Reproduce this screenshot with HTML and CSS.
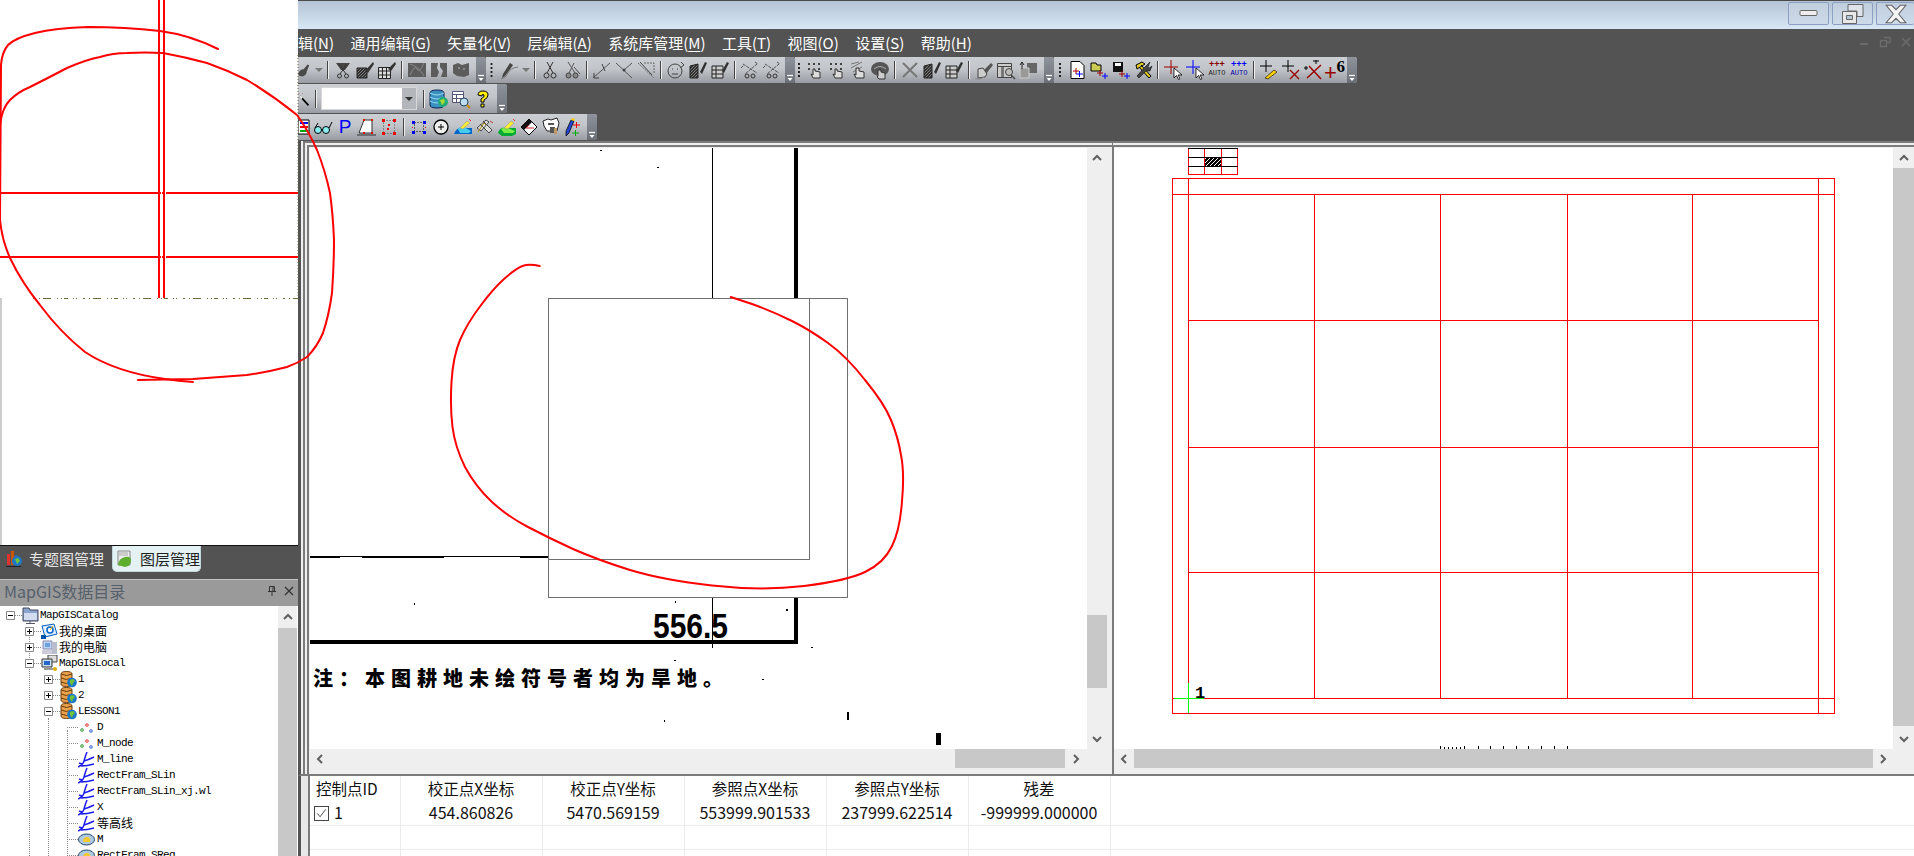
FILE: index.html
```html
<!DOCTYPE html>
<html lang="zh-CN">
<head>
<meta charset="utf-8">
<title>MapGIS</title>
<link rel="stylesheet" href="styles.css">
</head>
<body>
<svg class="sprite" aria-hidden="true">
  <defs>
    <pattern id="hatch" width="3" height="3" patternUnits="userSpaceOnUse"><rect width="3" height="3" fill="#333"/><path d="M0 3L3 0" stroke="#999" stroke-width=".7"/></pattern>
    <pattern id="maphatch" width="4" height="4" patternUnits="userSpaceOnUse"><rect width="4" height="4" fill="#000"/><path d="M0 4L4 0" stroke="#fff" stroke-width="1"/></pattern>
  </defs>
  <symbol id="hand" viewBox="0 0 20 20"><path d="M0 15Q2 9 7 9L12 3l2 1-3 8Q10 18 5 18 1 18 0 15z" fill="#4a4a4a"/></symbol>
  <symbol id="trapsc" viewBox="0 0 20 20"><path d="M3 3h14l-5 7H8z" fill="#444"/><path d="M6 4l7 10M14 4L7 14" stroke="#333" fill="none"/><circle cx="6.500" cy="16" r="2" fill="none" stroke="#333"/><circle cx="13.500" cy="16" r="2" fill="none" stroke="#333"/></symbol>
  <symbol id="hatchbr" viewBox="0 0 20 20"><path d="M2 8h10v10H2z" fill="url(#hatch)" stroke="#222"/><path d="M10 11l8-9 1 2-6 9z" fill="#333"/></symbol>
  <symbol id="gridbr" viewBox="0 0 20 20"><path d="M1.500 7.500h12v11h-12zM1.500 11h12M1.500 15h12M5.500 7.500v11M9.500 7.500v11" fill="#ddd" stroke="#222"/><path d="M11 9l7-7 1 2-5 7z" fill="#333"/></symbol>
  <symbol id="dim1" viewBox="0 0 20 20"><path d="M1 3h18v14H1z" fill="#5c5c5c"/><path d="M3 15Q8 4 10 9t7-6M3 4q8 2 14 12" fill="none" stroke="#888"/></symbol>
  <symbol id="dim2" viewBox="0 0 20 20"><path d="M2 3h7l-1 5 2 4-2 5H2zM11 3h7v14h-6l2-6-3-4z" fill="#5c5c5c"/></symbol>
  <symbol id="dim3" viewBox="0 0 20 20"><path d="M2 5l5-2 4 2 7-2v12l-5 2-7-1-4-3z" fill="#5c5c5c"/><circle cx="8" cy="8" r="1" fill="#999"/><circle cx="13" cy="9" r="1" fill="#999"/></symbol>
  <symbol id="pencv" viewBox="0 0 20 20"><path d="M3 14L10 3l3 2-8 11-3 2z" fill="#444"/><path d="M1 19q5-1 7-6 2-5 10-6" fill="none" stroke="#777"/></symbol>
  <symbol id="sc" viewBox="0 0 20 20"><path d="M7 2l6 11M13 2L7 13" stroke="#333"/><circle cx="6.500" cy="15.500" r="2.500" fill="none" stroke="#333"/><circle cx="13.500" cy="15.500" r="2.500" fill="none" stroke="#333"/></symbol>
  <symbol id="sc2" viewBox="0 0 20 20"><path d="M6 2l7 11M12 3L7 13M12 7l6 7" stroke="#555"/><circle cx="6.500" cy="15.500" r="2.500" fill="#888" stroke="#444"/><circle cx="13.500" cy="15.500" r="2.500" fill="#888" stroke="#444"/></symbol>
  <symbol id="ln1" viewBox="0 0 20 20"><path d="M1 18L18 3" stroke="#555"/><path d="M2 13v5h5M10 4l3 7" stroke="#444" fill="none"/></symbol>
  <symbol id="ln2" viewBox="0 0 20 20"><path d="M2 3l16 15M18 3L10 10" stroke="#555" fill="none"/><circle cx="10" cy="10" r="1.500" fill="#444"/></symbol>
  <symbol id="ln3" viewBox="0 0 20 20"><path d="M2 3l16 15M8 3h10v10" stroke="#666" fill="none" stroke-dasharray="2 1"/><path d="M4 2l12 13" stroke="#444"/></symbol>
  <symbol id="face" viewBox="0 0 20 20"><circle cx="9" cy="11" r="7" fill="none" stroke="#444"/><path d="M6 9h1M11 9h1M6 14h6M15 2l3 3-4 3" stroke="#444" fill="none"/></symbol>
  <symbol id="docpen" viewBox="0 0 20 20"><path d="M2 6l8-2v14H2z" fill="url(#hatch)" stroke="#222"/><path d="M12 12l5-10 2 1-5 11z" fill="#333"/></symbol>
  <symbol id="docpen2" viewBox="0 0 20 20"><path d="M2 6h11v12H2zM2 10h11M2 14h11M6 6v12" fill="#ccc" stroke="#222"/><path d="M12 11l5-9 2 1-5 10z" fill="#333"/></symbol>
  <symbol id="xsc" viewBox="0 0 20 20"><path d="M3 4l14 9M17 4L5 14M1 8l3-3M15 2l3 2" stroke="#555" stroke-dasharray="3 1" fill="none"/><circle cx="7" cy="16" r="2" fill="none" stroke="#333"/><circle cx="13" cy="16" r="2" fill="none" stroke="#333"/></symbol>
  <symbol id="tap1" viewBox="0 0 20 20"><path d="M4 3h2v2H4zM9 3h2v2H9zM14 3h2v2h-2zM4 8h2v2H4zM14 8h2v2h-2z" fill="#444"/><path d="M9 9v6l-2-1 2 4h7v-6l-5-1V9z" fill="#ddd" stroke="#333"/></symbol>
  <symbol id="tap2" viewBox="0 0 20 20"><path d="M3 8l11-6M3 4l8-2M5 12l9-5" stroke="#777" fill="none"/><path d="M8 8v7l-2-1 2 4h8v-6l-5-1V8z" fill="#ddd" stroke="#333"/></symbol>
  <symbol id="cloud" viewBox="0 0 20 20"><ellipse cx="10" cy="9" rx="9" ry="7" fill="#555"/><path d="M4 9q6-5 12 0" stroke="#aaa" fill="none"/><path d="M8 10v6l-1 1 2 2h6v-6l-4-1v-2z" fill="#ccc" stroke="#333"/></symbol>
  <symbol id="bigx" viewBox="0 0 20 20"><path d="M3 3l14 14M17 3L3 17" stroke="#777" stroke-width="2"/></symbol>
  <symbol id="brush" viewBox="0 0 20 20"><path d="M9 11l8-8 2 2-7 9z" fill="#555"/><path d="M4 9l5-1 4 6-2 3-7 1z" fill="#ccc" stroke="#444"/><path d="M1 19q6 1 9-2" fill="none" stroke="#888"/></symbol>
  <symbol id="winmag" viewBox="0 0 20 20"><path d="M1.500 3.500h14v14h-14zM1.500 6.500h14" fill="#ccc" stroke="#444"/><path d="M5 7h3v10H5z" fill="#777"/><circle cx="13" cy="12" r="3.500" fill="#bbb" stroke="#444"/><path d="M15 15l4 4" stroke="#444" stroke-width="1.500"/></symbol>
  <symbol id="stack" viewBox="0 0 20 20"><path d="M9 3h10v10H9z" fill="#666"/><path d="M2 8h9v10H2z" fill="#999" stroke="#ccc"/><path d="M4 9V2m-2 3l2-3 2 3" stroke="#222" fill="none"/></symbol>
  <symbol id="docplus" viewBox="0 0 20 20"><path d="M4 1.500h9l4 4v13H4z" fill="#fff" stroke="#000"/><path d="M6 11h6M9 8v6" stroke="#a00"/><path d="M9 14h7M12.500 11v6" stroke="#00f"/></symbol>
  <symbol id="openplus" viewBox="0 0 20 20"><path d="M2 3h5l1 2h4v6H2z" fill="#cc5" stroke="#000"/><path d="M8 13h6M11 10v6" stroke="#900"/><path d="M13 16h6M16 13v6" stroke="#00f"/></symbol>
  <symbol id="saveplus" viewBox="0 0 20 20"><path d="M2 2h10v10H2z" fill="#111"/><path d="M4 3h6v3H4z" fill="#fff"/><path d="M8 14h6M11 11v6" stroke="#900"/><path d="M13 16h6M16 13v6" stroke="#00f"/></symbol>
  <symbol id="tools" viewBox="0 0 20 20"><path d="M3 5l6-3 3 2-8 5zM6 7l10 11 2-2L8 5" fill="#ddc820" stroke="#000"/><path d="M17 2l-4 4-3 3-6 7 2 2 7-7 4 0 2-5-3 2-1-1z" fill="#444" stroke="#000" stroke-width=".5"/></symbol>
  <symbol id="crsr" viewBox="0 0 20 20"><path d="M11 8v10l2.500-2.500 2 4 1.500-.8-2-3.700H19z" fill="#fff" stroke="#000" stroke-width=".8"/></symbol>
  <symbol id="redcur" viewBox="0 0 20 20"><path d="M1 7h14M8 0v14" stroke="#900"/><use href="#crsr"/></symbol>
  <symbol id="bluecur" viewBox="0 0 20 20"><path d="M1 7h14M8 0v14" stroke="#00f"/><use href="#crsr"/></symbol>
  <symbol id="pens" viewBox="0 0 20 20"><path d="M1 6h12M7 0v12" stroke="#000"/><path d="M6 18l9-8 3 2-9 7z" fill="#fc0" stroke="#000" stroke-width=".6"/></symbol>
  <symbol id="plusx" viewBox="0 0 20 20"><path d="M1 6h12M7 0v12" stroke="#000"/><path d="M9 10l9 9M18 10l-9 9" stroke="#900" stroke-width="1.400"/></symbol>
  <symbol id="plusxx" viewBox="0 0 20 20"><path d="M1 8h4M3 6v4M10 1h6M13-2v6" stroke="#000"/><path d="M4 18L18 5M6 6l12 13" stroke="#900" stroke-width="1.500"/></symbol>
  <symbol id="wand" viewBox="0 0 20 20"><path d="M3 6l12 13" stroke="#000" stroke-width="2.500"/><path d="M3 6l3 3" stroke="#fff" stroke-width="2.500"/><path d="M1 2h1v1H1zM6 2h1v1H6z" fill="#900"/></symbol>
  <symbol id="dbg" viewBox="0 0 20 20"><path d="M1 4q0-3 7-3t7 3v12q0 3-7 3t-7-3z" fill="#3a90c0" stroke="#125"/><path d="M1 4q7 4 14 0M1 8q7 4 14 0M1 12q7 4 14 0" fill="none" stroke="#9de"/><circle cx="14" cy="13" r="5" fill="#2a7"/><path d="M11 11l4-1 1 3-3 3z" fill="#ad3"/></symbol>
  <symbol id="tblmag" viewBox="0 0 20 20"><path d="M1.500 2.500h11v11h-11zM1.500 5.500h11M1.500 9.500h11M5.500 5.500v8" fill="#fff" stroke="#557"/><circle cx="13" cy="13" r="4" fill="#bde" stroke="#246"/><path d="M16 16l3 3" stroke="#c80" stroke-width="2"/></symbol>
  <symbol id="help" viewBox="0 0 20 20"><path d="M5 6q0-4 5-4t5 4q0 3-4 5v2H8v-3q4-2 3-4-1-1-2 0v1z" fill="#fe0" stroke="#000"/><path d="M8 15h3v3H8z" fill="#fe0" stroke="#000"/></symbol>
  <symbol id="rowsdoc" viewBox="0 0 12 20"><path d="M0 3h11v14H0z" fill="#fff" stroke="#000"/><path d="M2 6h8" stroke="#00f" stroke-width="2"/><path d="M2 10h8" stroke="#e00" stroke-width="2"/><path d="M2 14h8" stroke="#0a0" stroke-width="2"/></symbol>
  <symbol id="glass" viewBox="0 0 20 20"><circle cx="5" cy="13" r="3.500" fill="#8ee" stroke="#000"/><circle cx="13" cy="13" r="3.500" fill="#8ee" stroke="#000"/><path d="M8.500 13h1M2 11l3-5M16 11l3-6" fill="none" stroke="#000"/></symbol>
  <symbol id="trap" viewBox="0 0 20 20"><path d="M7 3h8v13H2z" fill="#fff" stroke="#333"/><path d="M0 18h19" stroke="#333"/><path d="M6 2h2v2H6zM14 2h2v2h-2zM14 15h2v2h-2zM6 15h2v2H6z" fill="#e00"/></symbol>
  <symbol id="reddots" viewBox="0 0 20 20"><path d="M4.500 3.500h11v13h-11z" fill="none" stroke="#444" stroke-dasharray="1 2"/><path d="M3 2h3v3H3zM14 2h3v3h-3zM3 15h3v3H3zM14 15h3v3h-3zM9 7h2v2H9zM8 11h2v2H8z" fill="#e00"/></symbol>
  <symbol id="bluedots" viewBox="0 0 20 20"><path d="M5.500 5.500h9v9h-9z" fill="none" stroke="#000" stroke-dasharray="1 2"/><path d="M3 4h3v3H3zM14 4h3v3h-3zM3 14h3v3H3zM14 14h3v3h-3z" fill="#00e"/><path d="M3 10h1v1H3zM16 10h1v1h-1z" fill="#e00"/></symbol>
  <symbol id="circplus" viewBox="0 0 20 20"><circle cx="10" cy="10" r="7" fill="#eee" stroke="#000" stroke-width="1.300"/><path d="M7 10h6M10 7v6" stroke="#000"/></symbol>
  <symbol id="brblue" viewBox="0 0 20 20"><path d="M1 17q2-6 7-6h11v6z" fill="#06c"/><path d="M5 12q2-3 6-2l7 4-2 2H7z" fill="#4ce"/><path d="M7 11l7-7 3 2-7 6z" fill="#fe3" stroke="#888" stroke-width=".5"/><path d="M16 2l2 2" stroke="#e33"/></symbol>
  <symbol id="brtool" viewBox="0 0 20 20"><path d="M2 11l9-8 3 2-8 9zM8 4l9 9-3 3-9-9" fill="#ddd" stroke="#444"/><path d="M3 15l6-9 2 2" stroke="#a80" fill="none"/><path d="M15 4l3 2" stroke="#b33"/></symbol>
  <symbol id="brgreen" viewBox="0 0 20 20"><path d="M1 16q2-6 7-5h11v6l-4 2H5z" fill="#0a3"/><path d="M4 12q3-2 7-1l7 3-2 2H7z" fill="#7e4"/><path d="M7 11l7-7 3 2-6 6z" fill="#fe3" stroke="#888" stroke-width=".5"/><path d="M16 2l2 2" stroke="#e33"/></symbol>
  <symbol id="diaarrow" viewBox="0 0 20 20"><path d="M2 10l8-8 8 8-8 8z" fill="#fff" stroke="#000"/><path d="M10 2l-8 8 3 3 8-8z" fill="#111"/><path d="M7 11h8M7 11l3-3" stroke="#c22" fill="none"/></symbol>
  <symbol id="maptool" viewBox="0 0 20 20"><path d="M2 4l5-2 3 1 6-2 2 5-2 8H6L3 9z" fill="#fff" stroke="#222"/><path d="M7 6h6v2H7zM9 10h5v6H9z" fill="#555"/><path d="M13 11h3v6h-3z" fill="#b96"/></symbol>
  <symbol id="penplus" viewBox="0 0 20 20"><path d="M3 14L8 3l3 1-5 12-3 3z" fill="#24c" stroke="#000" stroke-width=".7"/><path d="M8 3l1-2 3 1-1 2z" fill="#fc0"/><path d="M10 8h7M13.500 5v6" stroke="#e00"/><path d="M9 16h7M12.500 13v6" stroke="#0a0"/></symbol>
  <symbol id="capmark" viewBox="0 0 8 8"><path d="M1 1.500h6" stroke="#fff" stroke-width="1.300"/><path d="M1.500 4h5L4 7z" fill="#fff"/></symbol>
  <symbol id="chev" viewBox="0 0 12 12"><path d="M2 8l4-4 4 4" fill="none" stroke="#606060" stroke-width="2"/></symbol>
  <symbol id="minus" viewBox="0 0 9 9"><path d="M.5.500h8v8h-8z" fill="#fff" stroke="#888"/><path d="M2 4.500h5" stroke="#000"/></symbol>
  <symbol id="plus" viewBox="0 0 9 9"><path d="M.5.500h8v8h-8z" fill="#fff" stroke="#888"/><path d="M2 4.500h5M4.500 2v5" stroke="#000"/></symbol>
  <symbol id="t-cat" viewBox="0 0 17 17"><path d="M1 1h6l1 2h8v11H1z" fill="#8aa4d0" stroke="#445"/><path d="M2 6h13v7H2z" fill="#d2dcf0"/><path d="M8 14v2M4 16.500h9" stroke="#556"/></symbol>
  <symbol id="t-desk" viewBox="0 0 17 17"><path d="M1 3l12-2 3 10-12 3z" fill="#def" stroke="#0a5cb8"/><circle cx="9" cy="7" r="3" fill="#fff" stroke="#06c" stroke-width="1.500"/><path d="M0 12h5v4H0z" fill="#05a"/><path d="M9 7l3-4" stroke="#fb0"/></symbol>
  <symbol id="t-pc" viewBox="0 0 17 17"><path d="M2 2h9v8H2z" fill="#bcd6f6" stroke="#88a"/><path d="M11 3h5v12h-5z" fill="#b8bccb"/><path d="M1 11h10v4H1z" fill="#ccd"/><path d="M4 4h5v4H4z" fill="#6b9fe0"/></symbol>
  <symbol id="t-local" viewBox="0 0 17 17"><path d="M7 0h9v7H7z" fill="#ddd" stroke="#444"/><path d="M1 4h10v8H1z" fill="#cde" stroke="#333"/><path d="M3 6h6v4H3z" fill="#26c"/><path d="M3 14h9" stroke="#333"/><circle cx="14" cy="14" r="2" fill="#da0"/></symbol>
  <symbol id="t-db" viewBox="0 0 17 17"><path d="M1 3q0-2.500 5.500-2.500T12 3v10q0 2.500-5.500 2.500T1 13z" fill="#e9a14a" stroke="#6a3c0c"/><path d="M1 3q5.500 3 11 0M1 7q5.500 3 11 0M1 11q5.500 3 11 0" fill="none" stroke="#6a3c0c"/><circle cx="12" cy="11.500" r="4.800" fill="#1b78c8"/><path d="M10 9l3-1 2 2-2 2-1 3-2-3z" fill="#6fc23a"/></symbol>
  <symbol id="t-pt" viewBox="0 0 17 17"><circle cx="4" cy="11" r="1.300" fill="none" stroke="#2a9a2a"/><circle cx="9" cy="6" r="1.300" fill="none" stroke="#e33"/><circle cx="13" cy="12" r="1.300" fill="none" stroke="#36c"/></symbol>
  <symbol id="t-ln" viewBox="0 0 17 17"><path d="M0 16Q5 14 6 10T9 1M6 10Q10 9 16 6M3 15Q9 15 16 13M1 12l3 1" fill="none" stroke="#1c1cf0" stroke-width="1.500"/></symbol>
  <symbol id="t-rg" viewBox="0 0 17 17"><ellipse cx="8.500" cy="8.500" rx="8" ry="5.500" fill="#aecae0" stroke="#246"/><path d="M5 11q0-5 4-5t3 5z" fill="#f6c92e"/></symbol>
  <symbol id="t-chart" viewBox="0 0 17 18"><path d="M1 4h3v11H1z" fill="#d33"/><path d="M5 1h3v14H5z" fill="#c50"/><path d="M9 5h2v10H9z" fill="#36b"/><path d="M0 16.500h15" stroke="#222"/><circle cx="11" cy="11" r="5" fill="#1b78c8"/><path d="M9 9l3-1 2 3-3 3z" fill="#6fc23a"/></symbol>
  <symbol id="t-layer" viewBox="0 0 15 18"><path d="M1 1h12v14H1z" fill="#eee" stroke="#888"/><path d="M2 3h9M2 5h9" stroke="#aaa"/><path d="M1 15q1-7 7-8t6 3q0 6-6 7z" fill="#5cae2c"/></symbol>
  <symbol id="pin" viewBox="0 0 12 12"><path d="M3.500 1.500h5v5h-5zM2 6.500h8M6 7v4M7 2v4" fill="none" stroke="#333"/></symbol>
  <symbol id="closex" viewBox="0 0 12 12"><path d="M2 2l8 8M10 2l-8 8" stroke="#333" stroke-width="1.300"/></symbol>
</svg>

<div class="app">
  <aside class="side">
    <div class="blank"></div>
    <div class="tabs">
      <div class="tab"><svg class="tab-ic"><use href="#t-chart"/></svg>专题图管理</div>
      <div class="tab tab-on"><svg class="tab-ic2"><use href="#t-layer"/></svg>图层管理</div>
    </div>
    <div class="dock-title">
      <span class="dock-name">MapGIS数据目录</span>
      <svg class="dock-btn"><use href="#pin"/></svg>
      <svg class="dock-btn"><use href="#closex"/></svg>
    </div>
    <div class="tree">
      <i class="guide g1"></i><i class="guide g2"></i><i class="guide g3"></i>
      <div class="tree-rows">
        <div class="row l0"><svg class="exp"><use href="#minus"/></svg><i class="stub"></i><svg class="ti"><use href="#t-cat"/></svg><span class="lat">MapGISCatalog</span></div>
        <div class="row l1"><svg class="exp"><use href="#plus"/></svg><i class="stub"></i><svg class="ti"><use href="#t-desk"/></svg><span class="cjk">我的桌面</span></div>
        <div class="row l1"><svg class="exp"><use href="#plus"/></svg><i class="stub"></i><svg class="ti"><use href="#t-pc"/></svg><span class="cjk">我的电脑</span></div>
        <div class="row l1"><svg class="exp"><use href="#minus"/></svg><i class="stub"></i><svg class="ti"><use href="#t-local"/></svg><span class="lat">MapGISLocal</span></div>
        <div class="row l2"><svg class="exp"><use href="#plus"/></svg><i class="stub"></i><svg class="ti"><use href="#t-db"/></svg><span class="lat">1</span></div>
        <div class="row l2"><svg class="exp"><use href="#plus"/></svg><i class="stub"></i><svg class="ti"><use href="#t-db"/></svg><span class="lat">2</span></div>
        <div class="row l2"><svg class="exp"><use href="#minus"/></svg><i class="stub"></i><svg class="ti"><use href="#t-db"/></svg><span class="lat">LESSON1</span></div>
        <div class="row l3"><i class="stub wide"></i><svg class="ti"><use href="#t-pt"/></svg><span class="lat">D</span></div>
        <div class="row l3"><i class="stub wide"></i><svg class="ti"><use href="#t-pt"/></svg><span class="lat">M_node</span></div>
        <div class="row l3"><i class="stub wide"></i><svg class="ti"><use href="#t-ln"/></svg><span class="lat">M_line</span></div>
        <div class="row l3"><i class="stub wide"></i><svg class="ti"><use href="#t-ln"/></svg><span class="lat">RectFram_SLin</span></div>
        <div class="row l3"><i class="stub wide"></i><svg class="ti"><use href="#t-ln"/></svg><span class="lat">RectFram_SLin_xj.wl</span></div>
        <div class="row l3"><i class="stub wide"></i><svg class="ti"><use href="#t-ln"/></svg><span class="lat">X</span></div>
        <div class="row l3"><i class="stub wide"></i><svg class="ti"><use href="#t-ln"/></svg><span class="cjk">等高线</span></div>
        <div class="row l3"><i class="stub wide"></i><svg class="ti"><use href="#t-rg"/></svg><span class="lat">M</span></div>
        <div class="row l3"><i class="stub wide"></i><svg class="ti"><use href="#t-rg"/></svg><span class="lat">RectFram_SReg</span></div>
      </div>
      <div class="tree-scroll"><div class="tree-up"><svg class="chev"><use href="#chev"/></svg></div><div class="tree-thumb"></div></div>
    </div>
  </aside>

  <main class="main">
    <header class="title">
      <div class="wbtn"><svg class="wic" viewBox="0 0 24 20"><rect x="3" y="6.500" width="17" height="5" rx="1" fill="#eee" stroke="#666"/></svg></div>
      <div class="wbtn"><svg class="wic" viewBox="0 0 24 20"><path d="M7 .5h15v12h-6V7H7z" fill="#dfe3ea" stroke="#666"/><path d="M1.500 7.500h14v12h-14z" fill="#e8e8e8" stroke="#666"/><path d="M5.500 11.500h6v4h-6z" fill="#b5c5d5" stroke="#666"/></svg></div>
      <div class="wbtn wbtn-x"><svg class="wic" viewBox="0 0 22 18"><path d="M2 1h5l4 4 4-4h5l-6.500 8L20 17h-5l-4-4-4 4H2l6.500-8z" fill="#f4f4f4" stroke="#666"/></svg></div>
    </header>

    <nav class="menu">
      <span class="mi">辑(<u>N</u>)</span>
      <span class="mi">通用编辑(<u>G</u>)</span>
      <span class="mi">矢量化(<u>V</u>)</span>
      <span class="mi">层编辑(<u>A</u>)</span>
      <span class="mi">系统库管理(<u>M</u>)</span>
      <span class="mi">工具(<u>T</u>)</span>
      <span class="mi">视图(<u>O</u>)</span>
      <span class="mi">设置(<u>S</u>)</span>
      <span class="mi">帮助(<u>H</u>)</span>
      <span class="mdi">
        <svg class="mdi-ic" viewBox="0 0 12 12"><path d="M2 8h8" stroke="#6c6c6c" stroke-width="2"/></svg>
        <svg class="mdi-ic" viewBox="0 0 12 12"><path d="M5 1.500h6v5H8M1.500 4.500h6v6h-6z" fill="none" stroke="#6c6c6c" stroke-width="1.300"/></svg>
        <svg class="mdi-ic" viewBox="0 0 12 12"><path d="M2 2l8 8M10 2l-8 8" stroke="#6c6c6c" stroke-width="1.600"/></svg>
      </span>
    </nav>

    <div class="tools">
      <div class="tb-row">
        <div class="seg w1">
          <svg class="ic ic16"><use href="#hand"/></svg><i class="drop"></i><i class="sep"></i>
          <svg class="ic"><use href="#trapsc"/></svg><svg class="ic"><use href="#hatchbr"/></svg><svg class="ic"><use href="#gridbr"/></svg><i class="sep"></i>
          <svg class="ic"><use href="#dim1"/></svg><svg class="ic"><use href="#dim2"/></svg><svg class="ic"><use href="#dim3"/></svg>
          <span class="cap"><svg class="capm"><use href="#capmark"/></svg></span>
        </div>
        <div class="seg w2">
          <i class="grip g13"></i>
          <svg class="ic"><use href="#pencv"/></svg><i class="drop"></i><i class="sep"></i>
          <svg class="ic"><use href="#sc"/></svg><svg class="ic"><use href="#sc2"/></svg><i class="sep"></i>
          <svg class="ic"><use href="#ln1"/></svg><svg class="ic"><use href="#ln2"/></svg><svg class="ic"><use href="#ln3"/></svg><i class="sep"></i>
          <svg class="ic"><use href="#face"/></svg><svg class="ic"><use href="#docpen"/></svg><svg class="ic"><use href="#docpen2"/></svg><i class="sep"></i>
          <svg class="ic"><use href="#xsc"/></svg><svg class="ic"><use href="#xsc"/></svg>
          <span class="cap"><svg class="capm"><use href="#capmark"/></svg></span>
        </div>
        <div class="seg w3">
          <i class="grip g8"></i>
          <svg class="ic"><use href="#tap1"/></svg><svg class="ic"><use href="#tap1"/></svg><svg class="ic"><use href="#tap2"/></svg><svg class="ic"><use href="#cloud"/></svg><i class="sep"></i>
          <svg class="ic"><use href="#bigx"/></svg><svg class="ic"><use href="#docpen"/></svg><svg class="ic"><use href="#docpen2"/></svg><i class="sep"></i>
          <svg class="ic"><use href="#brush"/></svg><svg class="ic"><use href="#winmag"/></svg><svg class="ic"><use href="#stack"/></svg>
          <span class="cap"><svg class="capm"><use href="#capmark"/></svg></span>
        </div>
        <div class="seg w4">
          <i class="grip g12"></i>
          <svg class="ic"><use href="#docplus"/></svg><svg class="ic"><use href="#openplus"/></svg><svg class="ic"><use href="#saveplus"/></svg><svg class="ic"><use href="#tools"/></svg><i class="sep"></i>
          <svg class="ic"><use href="#redcur"/></svg><svg class="ic"><use href="#bluecur"/></svg>
          <span class="auto">+++<b>AUTO</b></span><span class="auto blue">+++<b>AUTO</b></span><i class="sep"></i>
          <svg class="ic"><use href="#pens"/></svg><svg class="ic"><use href="#plusx"/></svg><svg class="ic"><use href="#plusxx"/></svg>
          <span class="six"><em>+</em><b>6</b></span>
          <span class="cap"><svg class="capm"><use href="#capmark"/></svg></span>
        </div>
      </div>
      <div class="tb-row">
        <div class="seg tall w5">
          <svg class="ic ic14"><use href="#wand"/></svg><i class="sep"></i>
          <div class="combo"><i class="combo-btn"></i></div><i class="sep"></i>
          <svg class="ic"><use href="#dbg"/></svg><svg class="ic"><use href="#tblmag"/></svg><svg class="ic"><use href="#help"/></svg>
          <span class="cap"><svg class="capm"><use href="#capmark"/></svg></span>
        </div>
      </div>
      <div class="tb-row">
        <div class="seg w6">
          <svg class="ic ic12"><use href="#rowsdoc"/></svg>
          <svg class="ic"><use href="#glass"/></svg><span class="pbtn">P</span><svg class="ic"><use href="#trap"/></svg><svg class="ic"><use href="#reddots"/></svg><i class="sep"></i>
          <svg class="ic"><use href="#bluedots"/></svg><svg class="ic"><use href="#circplus"/></svg><svg class="ic"><use href="#brblue"/></svg><svg class="ic"><use href="#brtool"/></svg><svg class="ic"><use href="#brgreen"/></svg><svg class="ic"><use href="#diaarrow"/></svg><svg class="ic"><use href="#maptool"/></svg><svg class="ic"><use href="#penplus"/></svg>
          <span class="cap"><svg class="capm"><use href="#capmark"/></svg></span>
        </div>
      </div>
    </div>

    <section class="stage">
      <div class="pane pane-l">
        <svg class="canvas cv-l" viewBox="310 148 777 601">
          <g class="crisp">
            <path d="M712.500 148V298M712.500 598V648" stroke="#000" fill="none"/>
            <path d="M796 148V298M796 597V643" stroke="#000" stroke-width="4" fill="none"/>
            <path d="M310 556.500H548" stroke="#000" fill="none"/>
            <path d="M310 557.500H340M362 557.500H444M520 557.500H548" stroke="#000" fill="none"/>
            <path d="M310 641.500H798" stroke="#000" stroke-width="4" fill="none"/>
            <rect class="frame-r" x="548.500" y="298.500" width="299" height="299"/>
            <rect class="frame-r" x="548.500" y="298.500" width="261" height="261"/>
            <path d="M600 150h2v1h-2zM657 167h2v1h-2zM414 603h1v2h-1zM786 609h2v2h-2zM664 720h1v2h-1zM847 712h2v8h-2zM674 660h2v1h-2zM675 601h1v2h-1zM811 647h2v1h-2zM762 679h2v1h-2z" fill="#000"/>
            <path d="M936 733h5v12h-5z" fill="#000"/>
          </g>
          <text class="num" x="653" y="638" textLength="75" lengthAdjust="spacingAndGlyphs">556.5</text>
          <text class="note" x="313" y="686">注：本图耕地未绘符号者均为旱地。</text>
        </svg>
        <div class="vs">
          <div class="sb-btn"><svg class="chev"><use href="#chev"/></svg></div>
          <div class="vs-track"><div class="thumb thumb-vl"></div></div>
          <div class="sb-btn"><svg class="chev down"><use href="#chev"/></svg></div>
        </div>
        <div class="hs">
          <div class="sb-btn"><svg class="chev left"><use href="#chev"/></svg></div>
          <div class="hs-track"><div class="thumb thumb-hl"></div></div>
          <div class="sb-btn"><svg class="chev right"><use href="#chev"/></svg></div>
        </div>
        <div class="corner"></div>
      </div>

      <div class="pane pane-r">
        <svg class="canvas cv-r" viewBox="1114 148 779 601">
          <g class="crisp" fill="none" stroke="#f00">
            <path d="M1188.500 148V174M1204.500 148V174M1221.500 148V174M1237.500 148V174M1188 174.500H1238"/>
            <rect x="1205" y="157" width="16" height="9" fill="url(#maphatch)" stroke="none"/>
            <path d="M1188 148.500H1238M1188 157.500H1238M1188 166.500H1238" stroke="#000"/>
            <rect x="1172.500" y="178.500" width="662" height="535"/>
            <path d="M1188.500 178V713M1818.500 178V713M1172 194.500H1835M1172 698.500H1835M1188 320.500H1818M1188 447.500H1818M1188 572.500H1818M1314.500 194V698M1440.500 194V698M1567.500 194V698M1692.500 194V698"/>
            <path d="M1174 698.500H1204M1188.500 683V713" stroke="#0f0"/>
            <path d="M1440 746v3M1444 747v2M1448 747v2M1452 747v2M1456 747v2M1460 747v2M1464 746v3M1478 746v3M1490 746v3M1503 746v3M1516 746v3M1528 746v3M1541 746v3M1554 746v3M1567 746v3" stroke="#000"/>
          </g>
          <text class="pt-no" x="1195" y="698">1</text>
        </svg>
        <div class="vs">
          <div class="sb-btn"><svg class="chev"><use href="#chev"/></svg></div>
          <div class="vs-track"><div class="thumb thumb-vr"></div></div>
          <div class="sb-btn"><svg class="chev down"><use href="#chev"/></svg></div>
        </div>
        <div class="hs">
          <div class="sb-btn"><svg class="chev left"><use href="#chev"/></svg></div>
          <div class="hs-track"><div class="thumb thumb-hr"></div></div>
          <div class="sb-btn"><svg class="chev right"><use href="#chev"/></svg></div>
        </div>
        <div class="corner"></div>
      </div>
    </section>

    <section class="points">
      <table class="pt">
        <colgroup><col class="c-id"><col class="c-n"><col class="c-n"><col class="c-n"><col class="c-n"><col class="c-n"><col></colgroup>
        <thead>
          <tr><th class="id">控制点ID</th><th>校正点X坐标</th><th>校正点Y坐标</th><th>参照点X坐标</th><th>参照点Y坐标</th><th>残差</th><th></th></tr>
        </thead>
        <tbody>
          <tr class="r1"><td class="id"><span class="chk"><svg class="chk-ic" viewBox="0 0 14 14"><path d="M2.500 7l3 3.500 6-8" fill="none" stroke="#444"/></svg></span>1</td><td>454.860826</td><td>5470.569159</td><td>553999.901533</td><td>237999.622514</td><td>-999999.000000</td><td></td></tr>
          <tr class="r2"><td></td><td></td><td></td><td></td><td></td><td></td><td></td></tr>
          <tr class="r3"><td></td><td></td><td></td><td></td><td></td><td></td><td></td></tr>
        </tbody>
      </table>
    </section>
  </main>
</div>

<svg class="annot" viewBox="0 0 1914 856" aria-hidden="true">
  <rect class="paste" x="0" y="0" width="298" height="298"/>
  <rect class="paste-edge" x="0" y="298" width="2" height="247"/>
  <path class="paste-dash" d="M33 298.500H298"/>
  <path class="paste-dots" d="M298 55V298"/>
  <g class="crisp">
    <path class="red2" d="M159 0V298M164 0V298M0 193H158M166 193H298M0 257H158M166 257H298"/>
    <path class="red2" d="M160 193h3M160 257h3" stroke-dasharray="1 1"/>
  </g>
  <path class="ink" d="M0 125Q2 108 10 100Q18 92 30 87Q48 78 67 68Q85 60 100 57Q113 53 127 53Q145 52 163 53Q185 57 207 63Q227 70 247 80Q272 95 297 115Q308 130 317 150Q325 170 330 193Q333 215 334 240Q334 265 332 293Q329 315 323 333Q317 347 307 357Q298 363 287 367Q268 372 247 375Q220 377 193 379L138 380"/>
  <path class="ink" d="M218 49Q190 35 160 31Q125 27 88 27Q55 28 35 33Q15 38 8 45Q2 52 1 65L0 220Q2 240 10 258Q22 283 40 305Q60 332 85 352Q115 372 165 379Q178 381 193 382"/>
  <path class="ink" d="M539.700 266Q528.700 263.700 522.500 266Q516.400 268 504 279Q492 290 480 306.500Q467.400 323 460 340Q453 356.700 451.500 382Q450 406.700 452.500 427Q455 446.700 465 467Q475.600 486.700 492 502Q508 516.700 528 527Q549 538 573 549Q598 560 630 570Q663 580 712 585.500Q761 591 804 586Q847 580.700 865 572Q884 563 892 546Q900 530 902 501Q904.600 473 901 455Q898 436.700 891 420Q884 403 865 380Q847 356.700 828 343Q810 330 792 321Q773.500 311.700 752 304L730.700 297"/>
</svg>
</body>
</html>
```

FILE: styles.css
```css
html, body { margin: 0; padding: 0; }
body { width: 1914px; height: 856px; overflow: hidden; background: #535353; font-family: "Noto Sans CJK SC", "Liberation Sans", sans-serif; position: relative; }
.sprite { position: absolute; width: 0; height: 0; }
.crisp { shape-rendering: crispEdges; }

.app { display: flex; width: 1914px; height: 856px; overflow: hidden; }
.side { width: 298px; flex: none; display: flex; flex-direction: column; background: #535353; }
.main { width: 1616px; flex: none; display: flex; flex-direction: column; }

/* pasted white patch and red pen marks lying over the window */
.annot { position: absolute; left: 0; top: 0; width: 1914px; height: 856px; pointer-events: none; }
.paste { fill: #fff; }
.paste-edge { fill: #ccc; }
.paste-dash { stroke: #6b6b3a; fill: none; stroke-dasharray: 2 4 1 3 8 6 1 3 1 2 4 5 1 2 1 6; }
.paste-dots { stroke: #6b6b3a; fill: none; stroke-dasharray: 1 2; }
.red2 { stroke: #f00; stroke-width: 2; fill: none; }
.ink { stroke: #f00; stroke-width: 2; fill: none; stroke-linecap: round; stroke-linejoin: round; }

/* left dock */
.blank { height: 545px; background: #fff; border-bottom: 1px solid #111; flex: none; }
.tabs { height: 33px; flex: none; display: flex; align-items: flex-start; font-size: 15px; color: #e6e6e6; }
.tab { display: flex; align-items: center; height: 25px; padding-left: 6px; }
.tab-ic { width: 17px; height: 18px; margin-right: 6px; }
.tab-ic2 { width: 15px; height: 18px; margin-right: 8px; }
.tab-on { height: 25px; width: 83px; margin-left: 8px; padding-left: 4px; color: #222; background: #e4f2f4; border: 1px solid #c2d8dc; border-top: 0; border-radius: 0 0 5px 5px; box-sizing: content-box; }
.dock-title { height: 27px; flex: none; display: flex; align-items: center; background: #9a9a9a; border-top: 1px solid #c4c4c4; box-sizing: border-box; padding: 0 3px 4px 4px; }
.dock-name { font-size: 16px; line-height: 20px; color: #56606c; flex: 1; }
.dock-btn { width: 12px; height: 12px; margin-left: 5px; }
.tree { flex: 1; min-height: 0; background: #fff; position: relative; display: flex; overflow: hidden; }
.tree-rows { flex: 1; padding-top: 1px; }
.guide { position: absolute; width: 0; border-left: 1px dotted #888; bottom: 0; }
.g1 { left: 29px; top: 28px; }
.g2 { left: 48px; top: 112px; }
.g3 { left: 67px; top: 124px; }
.row { height: 16px; display: flex; align-items: center; position: relative; white-space: nowrap; color: #000; }
.l0 { padding-left: 6px; }
.l1 { padding-left: 25px; }
.l2 { padding-left: 44px; }
.l3 { padding-left: 67px; }
.exp { width: 9px; height: 9px; flex: none; }
.stub { width: 7px; border-top: 1px dotted #888; flex: none; }
.stub.wide { width: 11px; }
.ti { width: 17px; height: 17px; flex: none; margin-right: 1px; }
.l3 .ti { margin-right: 2px; }
.lat { font: 11px/16px "Liberation Mono", monospace; letter-spacing: -.6px; }
.cjk { font-size: 12px; line-height: 16px; }
.tree-scroll { width: 19px; flex: none; margin-right: 1px; display: flex; flex-direction: column; }
.tree-up { height: 22px; background: #efefef; display: flex; align-items: center; justify-content: center; }
.tree-thumb { flex: 1; background: #c8c8c8; }

/* title */
.title { height: 29px; flex: none; box-sizing: border-box; border-top: 1px solid #4a4a4a; background: linear-gradient(#b4c4d4, #d7e7f6); display: flex; justify-content: flex-end; gap: 3px; padding-top: 1px; }
.wbtn { width: 41px; height: 23px; box-sizing: border-box; border: 1px solid #8d9fc2; border-radius: 2px; background: linear-gradient(#c0cede, #ccdaea); display: flex; align-items: center; justify-content: center; }
.wbtn-x { width: 38px; border-right: 0; }
.wic { width: 24px; height: 20px; }

/* menu */
.menu { height: 28px; box-sizing: border-box; padding-bottom: 2px; flex: none; display: flex; align-items: center; gap: 16.400px; font-size: 15px; color: #fff; white-space: nowrap; }
.mi u { text-underline-offset: 2px; }
.mdi { margin-left: auto; display: flex; gap: 9px; padding-right: 2px; }
.mdi-ic { width: 12px; height: 12px; }

/* toolbars */
.tools { display: flex; flex-direction: column; flex: none; gap: 1px; padding-bottom: 1px; }
.tb-row { display: flex; }
.seg { height: 26px; display: flex; align-items: center; background: linear-gradient(#cbced3, #c2c5ca 45%, #999ca2); border-radius: 0 3px 3px 0; flex: none; }
.seg.tall { height: 29px; }
.w1 { width: 188px; }
.w2 { width: 309px; }
.w3 { width: 259px; }
.w4 { width: 303px; }
.w5 { width: 209px; }
.w6 { width: 299px; }
.ic { width: 22px; height: 20px; flex: none; }
.ic16 { width: 16px; }
.ic14 { width: 14px; }
.ic12 { width: 12px; margin-right: 2px; }
.drop { width: 10px; height: 0; flex: none; position: relative; }
.drop::after { content: ""; position: absolute; left: 1px; top: -2px; border: 4px solid transparent; border-top: 4px solid #777; }
.sep { width: 2px; height: 18px; margin: 0 3px; background: linear-gradient(to right, #444 50%, #eee 50%); flex: none; }
.grip { flex: none; height: 16px; background: radial-gradient(circle at 50% 50%, #222 1px, transparent 1.200px) 0 0 / 100% 4px repeat-y; }
.g13 { width: 13px; background-position-x: -1px; }
.g8 { width: 8px; }
.g12 { width: 12px; }
.cap { margin-left: auto; width: 10px; height: 100%; flex: none; background: linear-gradient(#8e939c, #7c8088 55%, #6a6e75); border-radius: 0 3px 3px 0; display: flex; align-items: flex-end; justify-content: center; padding-bottom: 1px; box-sizing: border-box; }
.capm { width: 8px; height: 8px; }
.auto { width: 22px; height: 20px; flex: none; display: flex; flex-direction: column; align-items: center; font: 700 9px/9px "Liberation Sans", sans-serif; color: #800; overflow: hidden; }
.auto b { font: 400 7px/9px "Liberation Mono", monospace; color: #222; }
.auto.blue { color: #00f; }
.auto.blue b { color: #00a; }
.six { width: 22px; height: 22px; flex: none; position: relative; display: block; }
.six em { position: absolute; left: 0; top: 6px; font: 400 22px/16px "Liberation Sans", sans-serif; color: #900; }
.six b { position: absolute; right: 1px; top: -2px; font: 700 17px/20px "Liberation Serif", serif; color: #000; }
.combo { width: 96px; height: 23px; margin: 0 3px 0 1px; flex: none; background: #fff; border: 1px solid #d8d8d8; box-sizing: border-box; display: flex; justify-content: flex-end; }
.combo-btn { width: 14px; background: #b3b6ba; position: relative; }
.combo-btn::after { content: ""; position: absolute; left: 3px; top: 9px; border: 4px solid transparent; border-top: 4px solid #333; }
.pbtn { width: 22px; flex: none; text-align: center; font: 400 19px/20px "Liberation Sans", sans-serif; color: #00f; }

/* map views */
.stage { height: 635px; flex: none; display: flex; background: #eee; border-left: 3px solid #535353; border-bottom: 2px solid #7b7b7b; box-sizing: border-box; }
.pane { display: grid; background: #efefef; box-sizing: content-box; padding-top: 1px; border-top: 6px double #7b7b7b; }
.pane-l { margin-left: 2px; border-left: 6px double #7b7b7b; padding-left: 1px; padding-right: 5px; grid-template-columns: 777px 20px; grid-template-rows: 601px 19px; align-content: start; }
.pane-r { border-left: 2px solid #7b7b7b; grid-template-columns: 779px 21px; grid-template-rows: 601px 19px; align-content: start; }
.canvas { display: block; background: #fff; width: 100%; height: 601px; }
.frame-r { fill: #fff; stroke: #707070; }
.frame-r + .frame-r { fill: none; }
.num { font: 700 35px "Liberation Sans", sans-serif; fill: #000; }
.note { font: 900 20px "Noto Sans CJK SC", sans-serif; letter-spacing: 6px; fill: #000; }
.pt-no { font: 700 17px "Liberation Mono", monospace; fill: #000; }
.vs { display: grid; grid-template-rows: 20px 1fr 20px; background: #efefef; }
.hs { display: flex; background: #efefef; }
.sb-btn { display: flex; align-items: center; justify-content: center; min-width: 20px; flex: none; }
.vs-track { min-height: 0; }
.hs-track { flex: 1; display: flex; }
.thumb { background: #c8c8c8; }
.thumb-vl { margin-top: 447px; height: 73px; }
.thumb-vr { height: 558px; }
.thumb-hl { margin-left: 625px; width: 110px; }
.thumb-hr { flex: 1; }
.pane-l .hs .sb-btn:last-child { min-width: 22px; }
.corner { background: #efefef; }
.chev { width: 12px; height: 12px; display: block; }
.chev.down { transform: rotate(180deg); }
.chev.left { transform: rotate(-90deg); }
.chev.right { transform: rotate(90deg); }

/* control point table */
.points { flex: 1; min-height: 0; overflow: hidden; background: #fff; border-left: 3px solid #535353; box-sizing: border-box; display: flex; }
.points::before { content: ""; width: 7px; flex: none; background: #e8e8e8; border-right: 2px solid #7b7b7b; }
.pt { border-collapse: collapse; table-layout: fixed; width: 1604px; height: 73px; flex: none; font-size: 16px; color: #111; align-self: flex-start; }
.c-id { width: 90px; }
.c-n { width: 142px; }
.pt th { box-sizing: border-box; height: 26px; padding: 0 0 2px; font-size: 15.500px; line-height: 20px; font-weight: 400; text-align: center; border-right: 1px solid #ececec; white-space: nowrap; }
.pt td { box-sizing: border-box; padding: 0 0 1px; line-height: 19px; text-align: center; border-right: 1px solid #ececec; border-bottom: 1px solid #ececec; white-space: nowrap; }
.pt th:last-child, .pt td:last-child { border-right: 0; }
.pt th.id { text-align: left; padding-left: 6px; }
.pt td.id { text-align: left; padding-left: 4px; }
.r1 td { height: 23px; }
.r2 td { height: 24px; }
.r3 td { height: 24px; }
.chk { display: inline-block; width: 15px; height: 15px; border: 1px solid #444; box-sizing: border-box; vertical-align: -2px; margin-right: 5px; }
.chk-ic { display: block; width: 13px; height: 13px; }
```
